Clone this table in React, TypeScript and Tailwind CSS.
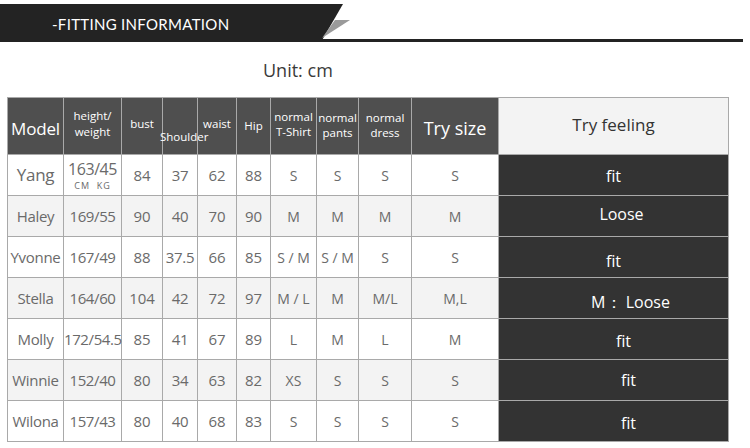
import React from 'react'

type Row = {
  name: string
  hw: string
  bust: string
  shoulder: string
  waist: string
  hip: string
  tee: string
  pants: string
  dress: string
  size: string
  feeling: string
  shade: boolean
  feelClass: string
}

const rows: Row[] = [
  { name: 'Yang', hw: '163/45', bust: '84', shoulder: '37', waist: '62', hip: '88', tee: 'S', pants: 'S', dress: 'S', size: 'S', feeling: 'fit', shade: false, feelClass: 'pt-[2px]' },
  { name: 'Haley', hw: '169/55', bust: '90', shoulder: '40', waist: '70', hip: '90', tee: 'M', pants: 'M', dress: 'M', size: 'M', feeling: 'Loose', shade: true, feelClass: 'pl-[16px] pb-[4px]' },
  { name: 'Yvonne', hw: '167/49', bust: '88', shoulder: '37.5', waist: '66', hip: '85', tee: 'S / M', pants: 'S / M', dress: 'S', size: 'S', feeling: 'fit', shade: false, feelClass: 'pt-[8px]' },
  { name: 'Stella', hw: '164/60', bust: '104', shoulder: '42', waist: '72', hip: '97', tee: 'M / L', pants: 'M', dress: 'M/L', size: 'M,L', feeling: 'M： Loose', shade: true, feelClass: 'pl-[34px] pt-[8px]' },
  { name: 'Molly', hw: '172/54.5', bust: '85', shoulder: '41', waist: '67', hip: '89', tee: 'L', pants: 'M', dress: 'L', size: 'M', feeling: 'fit', shade: false, feelClass: 'pl-[20px] pt-[4px]' },
  { name: 'Winnie', hw: '152/40', bust: '80', shoulder: '34', waist: '63', hip: '82', tee: 'XS', pants: 'S', dress: 'S', size: 'S', feeling: 'fit', shade: true, feelClass: 'pl-[30px]' },
  { name: 'Wilona', hw: '157/43', bust: '80', shoulder: '40', waist: '68', hip: '83', tee: 'S', pants: 'S', dress: 'S', size: 'S', feeling: 'fit', shade: false, feelClass: 'pl-[30px] pt-[4px]' },
]

const widths = ['w-[56px]', 'w-[58px]', 'w-[41px]', 'w-[35px]', 'w-[39px]', 'w-[34px]', 'w-[46px]', 'w-[42px]', 'w-[53px]', 'w-[87px]', 'w-[230px]']

export default function App() {
  return (
    <div className="w-[750px] h-[448px] bg-white overflow-hidden font-['Open_Sans','Noto_Sans',sans-serif]">
      {/* Title banner */}
      <div className="flex items-end pt-[3px] h-[42px]">
        <div className="w-[321px] h-[38px] bg-[#232323] flex items-center pl-[52px]">
          <span className="text-white text-[15px] tracking-[0.3px] font-['Lato',sans-serif] leading-none pt-[2px]">
            -FITTING INFORMATION
          </span>
        </div>
        <svg width="30" height="38" viewBox="0 0 30 38" className="shrink-0">
          <polygon points="0,0 22,0 0,38" fill="#232323" />
          <polygon points="14,16 29,16 1,34" fill="#9a9a9a" />
          <rect x="0" y="35" width="30" height="3" fill="#232323" />
        </svg>
        <div className="w-[392px] h-[3px] bg-[#232323]" />
      </div>

      {/* Unit */}
      <div className="pl-[263px] pt-[19px] h-[55px] text-[18px] text-[#3a3a3a] leading-none">
        Unit: cm
      </div>

      {/* Table */}
      <table className="ml-[7px] table-fixed border-collapse w-[721px] text-center">
        <colgroup>
          {widths.map((w, i) => (
            <col key={i} className={w} />
          ))}
        </colgroup>
        <thead>
          <tr className="h-[57px] bg-[#4f4f4f] text-white">
            <th className="border border-[#a9a9a9] font-normal text-[17px] tracking-[-0.2px] p-0 pt-[6px]">Model</th>
            <th className="border border-[#a9a9a9] font-normal text-[11.5px] leading-[16px] p-0 pb-[4px]">height/<br />weight</th>
            <th className="border border-[#a9a9a9] font-normal text-[11.5px] p-0 pb-[4px]">bust</th>
            <th className="border border-[#a9a9a9] font-normal text-[11.5px] p-0 pt-[22px] whitespace-nowrap">
              <span className="inline-block -translate-x-[3px]">Shoulder</span>
            </th>
            <th className="border border-[#a9a9a9] font-normal text-[11.5px] p-0 pb-[4px]">waist</th>
            <th className="border border-[#a9a9a9] font-normal text-[11.5px] p-0">Hip</th>
            <th className="border border-[#a9a9a9] font-normal text-[11.5px] leading-[15px] p-0 pb-[4px]">normal<br />T-Shirt</th>
            <th className="border border-[#a9a9a9] font-normal text-[11.5px] leading-[15px] p-0 pb-[2px]">normal<br />pants</th>
            <th className="border border-[#a9a9a9] font-normal text-[11.5px] leading-[15px] p-0 pb-[2px]">normal<br />dress</th>
            <th className="border border-[#a9a9a9] font-normal text-[18px] p-0 pt-[4px]">Try size</th>
            <th className="border border-[#a9a9a9] font-normal text-[17px] p-0 pb-[2px] bg-[#f3f3f3] text-[#333]">Try feeling</th>
          </tr>
        </thead>
        <tbody className="text-[#6a6a6a] text-[15px]">
          {rows.map((r) => (
            <tr key={r.name} className={`h-[41px] ${r.shade ? 'bg-[#f3f3f3]' : 'bg-white'}`}>
              <td className={`border border-[#a9a9a9] p-0 ${r.name === 'Yang' ? 'text-[17px]' : 'text-[15px]'} tracking-[-0.3px]`}>{r.name}</td>
              <td className="border border-[#a9a9a9] p-0 tracking-[-0.4px]">
                {r.name === 'Yang' ? (
                  <div className="flex flex-col items-center">
                    <span className="text-[16px] leading-[22px]">{r.hw}</span>
                    <span className="text-[9px] leading-[12px] tracking-[1px]">CM&nbsp;&nbsp;KG</span>
                  </div>
                ) : (
                  r.hw
                )}
              </td>
              <td className="border border-[#a9a9a9] p-0">{r.bust}</td>
              <td className="border border-[#a9a9a9] p-0 tracking-[-0.3px]">{r.shoulder}</td>
              <td className="border border-[#a9a9a9] p-0">{r.waist}</td>
              <td className="border border-[#a9a9a9] p-0">{r.hip}</td>
              <td className="border border-[#a9a9a9] p-0 text-[14px]">{r.tee}</td>
              <td className="border border-[#a9a9a9] p-0 text-[14px]">{r.pants}</td>
              <td className="border border-[#a9a9a9] p-0 text-[14px]">{r.dress}</td>
              <td className="border border-[#a9a9a9] p-0 text-[14px]">{r.size}</td>
              <td className={`border border-[#a9a9a9] p-0 bg-[#333333] text-white text-[16px] ${r.feelClass}`}>
                {r.feeling}
              </td>
            </tr>
          ))}
        </tbody>
      </table>
    </div>
  )
}
